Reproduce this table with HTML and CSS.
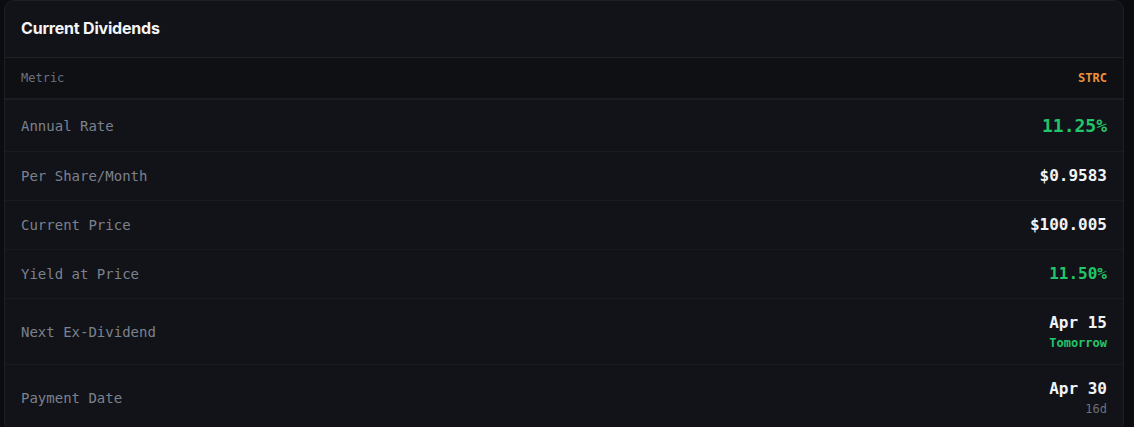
FILE: index.html
```html
<!DOCTYPE html>
<html lang="en">
<head>
<meta charset="utf-8">
<title>Current Dividends</title>
<link rel="stylesheet" href="styles.css">
</head>
<body>
<section class="card">
  <header class="card-head">
    <h2 class="card-title">Current Dividends</h2>
  </header>
  <div class="table">
    <div class="row row-head">
      <span class="label-head">Metric</span>
      <span class="ticker">STRC</span>
    </div>
    <div class="row">
      <span class="label">Annual Rate</span>
      <span class="value big green">11.25%</span>
    </div>
    <div class="row">
      <span class="label">Per Share/Month</span>
      <span class="value">$0.9583</span>
    </div>
    <div class="row">
      <span class="label">Current Price</span>
      <span class="value">$100.005</span>
    </div>
    <div class="row">
      <span class="label">Yield at Price</span>
      <span class="value green">11.50%</span>
    </div>
    <div class="row row-stack">
      <span class="label">Next Ex-Dividend</span>
      <span class="stack">
        <span class="value">Apr 15</span>
        <span class="sub green strong">Tomorrow</span>
      </span>
    </div>
    <div class="row row-stack">
      <span class="label">Payment Date</span>
      <span class="stack">
        <span class="value">Apr 30</span>
        <span class="sub muted">16d</span>
      </span>
    </div>
  </div>
</section>
</body>
</html>
```

FILE: styles.css
```css
html, body {
  margin: 0;
  padding: 0;
  background: #0b0c0f;
}
body {
  padding: 0 10px 0 4px;
  font-family: "DejaVu Sans Mono", "Liberation Mono", monospace;
}
.card {
  background: #111318;
  border: 1px solid #1d1f25;
  border-radius: 10px;
  overflow: hidden;
}
.card-head {
  height: 56px;
  display: flex;
  align-items: center;
  padding: 0 16px;
  border-bottom: 1px solid #1d1f25;
}
.card-title {
  margin: 0 0 2px;
  font-family: Inter, "Noto Sans", sans-serif;
  font-weight: 700;
  font-size: 16px;
  color: #f4f5f7;
  letter-spacing: -0.2px;
}
.table {
  display: flex;
  flex-direction: column;
}
.row {
  display: flex;
  justify-content: space-between;
  align-items: center;
  padding: 15px 16px;
  border-bottom: 1px solid #181a1f;
}
.row-stack {
  padding: 15px 16px 14px;
}
.row-head {
  background: #0e1014;
  padding: 12px 16px;
  border-bottom: 2px solid #1b1d23;
}
.label-head {
  font-size: 12px;
  line-height: 16px;
  color: #6c717d;
}
.ticker {
  font-size: 12px;
  line-height: 16px;
  font-weight: 700;
  color: #f0913a;
}
.label {
  font-size: 14px;
  line-height: 18px;
  color: #7c818e;
}
.value {
  font-size: 16px;
  line-height: 18px;
  font-weight: 700;
  color: #f2f3f5;
}
.value.big {
  font-size: 18px;
  line-height: 21px;
}
.green {
  color: #22c56a;
}
.value.green {
  color: #22c56a;
}
.stack {
  display: flex;
  flex-direction: column;
  align-items: flex-end;
  gap: 5px;
}
.sub {
  font-size: 12px;
  line-height: 13px;
}
.strong {
  font-weight: 700;
}
.muted {
  color: #6c717d;
}
```
